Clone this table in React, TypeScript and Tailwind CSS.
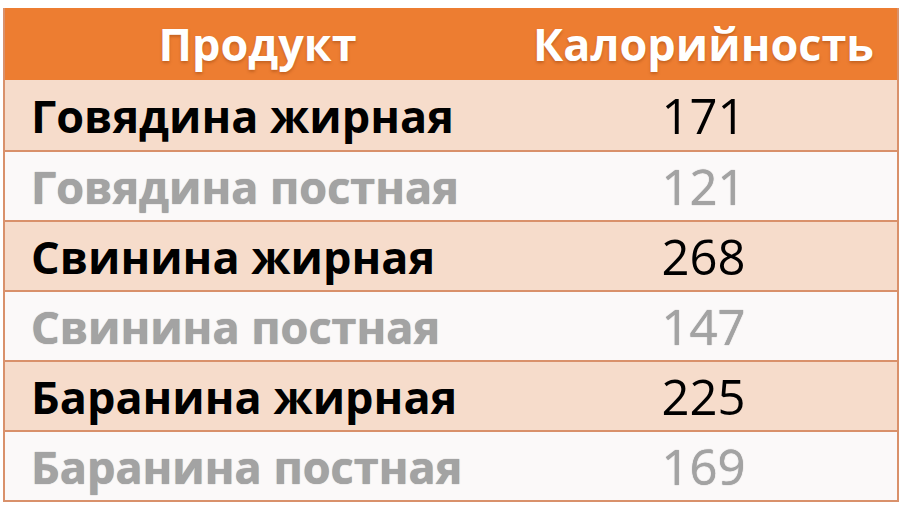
const rows = [
  { name: 'Говядина жирная', kcal: 171, fat: true },
  { name: 'Говядина постная', kcal: 121, fat: false },
  { name: 'Свинина жирная', kcal: 268, fat: true },
  { name: 'Свинина постная', kcal: 147, fat: false },
  { name: 'Баранина жирная', kcal: 225, fat: true },
  { name: 'Баранина постная', kcal: 169, fat: false },
]

export default function App() {
  return (
    <div className="h-[508px] w-[906px] bg-white pl-[3px] pt-[8px] font-['Open_Sans',sans-serif]">
      <div className="w-[896px] border-2 border-t-0 border-[#d9916b]">
        {/* Header */}
        <div className="flex h-[72px] items-center bg-[#ed7d31] text-[45px] font-bold text-white [text-shadow:0_2px_3px_rgba(120,50,0,0.35)]">
          <div className="w-[505px] text-center">Продукт</div>
          <div className="flex-1 text-center">Калорийность</div>
        </div>

        {rows.map((r, i) => (
          <div
            key={r.name}
            className={`flex h-[70px] items-center ${i > 0 ? 'border-t-2 border-[#d9916b]' : ''} ${
              r.fat ? 'bg-[#f6dccb] text-black' : 'bg-[#fbf9f9] text-[#a3a3a3] [text-shadow:0_0_1px_rgba(60,60,60,0.6)]'
            }`}
          >
            <div className="w-[505px] pl-[26px] text-[45px] font-bold leading-none">{r.name}</div>
            <div className="flex-1 text-center text-[49px] leading-none">{r.kcal}</div>
          </div>
        ))}
      </div>
    </div>
  )
}
